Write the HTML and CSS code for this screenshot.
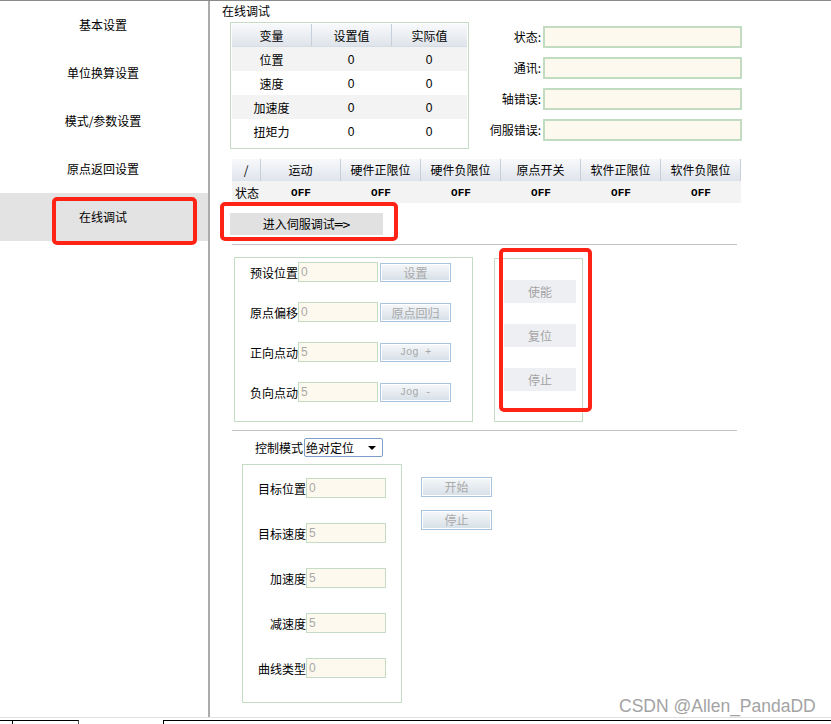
FILE: index.html
```html
<!DOCTYPE html>
<html lang="zh-CN">
<head>
<meta charset="utf-8">
<title>在线调试</title>
<link rel="stylesheet" href="styles.css">
</head>
<body>
<div class="screen">
  <div class="app">
    <nav class="sidebar">
      <div class="nav-item">基本设置</div>
      <div class="nav-item">单位换算设置</div>
      <div class="nav-item">模式/参数设置</div>
      <div class="nav-item">原点返回设置</div>
      <div class="nav-item active">在线调试</div>
    </nav>
    <main class="main">
      <div class="title">在线调试</div>
      <div class="top">
        <div class="vtable">
          <div class="vrow vhead"><span>变量</span><span>设置值</span><span>实际值</span></div>
          <div class="vrow alt"><span>位置</span><span class="num">0</span><span class="num">0</span></div>
          <div class="vrow"><span>速度</span><span class="num">0</span><span class="num">0</span></div>
          <div class="vrow alt"><span>加速度</span><span class="num">0</span><span class="num">0</span></div>
          <div class="vrow"><span>扭矩力</span><span class="num">0</span><span class="num">0</span></div>
        </div>
        <div class="status">
          <label>状态:</label><div class="field"></div>
          <label>通讯:</label><div class="field"></div>
          <label>轴错误:</label><div class="field"></div>
          <label>伺服错误:</label><div class="field"></div>
        </div>
      </div>
      <div class="io">
        <div class="io-row io-head">
          <span>/</span><span>运动</span><span>硬件正限位</span><span>硬件负限位</span><span>原点开关</span><span>软件正限位</span><span>软件负限位</span>
        </div>
        <div class="io-row io-state">
          <span>状态</span><span class="off">OFF</span><span class="off">OFF</span><span class="off">OFF</span><span class="off">OFF</span><span class="off">OFF</span><span class="off">OFF</span>
        </div>
      </div>
      <button class="enter">进入伺服调试<span class="arrow">═&gt;</span></button>
      <div class="sep"></div>
      <div class="panels">
        <div class="box jog">
          <div class="jrow"><span class="lbl">预设位置</span><div class="inp">0</div><div class="btn">设置</div></div>
          <div class="jrow"><span class="lbl">原点偏移</span><div class="inp">0</div><div class="btn">原点回归</div></div>
          <div class="jrow"><span class="lbl">正向点动</span><div class="inp">5</div><div class="btn mono">Jog +</div></div>
          <div class="jrow"><span class="lbl">负向点动</span><div class="inp">5</div><div class="btn mono">Jog -</div></div>
        </div>
        <div class="box servo">
          <div class="sbtn">使能</div>
          <div class="sbtn">复位</div>
          <div class="sbtn">停止</div>
        </div>
      </div>
      <div class="sep sep2"></div>
      <div class="mode">
        <span class="lbl">控制模式</span>
        <div class="select"><span>绝对定位</span><i class="caret"></i></div>
      </div>
      <div class="lower">
        <div class="box motion">
          <div class="mrow"><span class="lbl">目标位置</span><div class="inp">0</div></div>
          <div class="mrow"><span class="lbl">目标速度</span><div class="inp">5</div></div>
          <div class="mrow"><span class="lbl">加速度</span><div class="inp">5</div></div>
          <div class="mrow"><span class="lbl">减速度</span><div class="inp">5</div></div>
          <div class="mrow"><span class="lbl">曲线类型</span><div class="inp">0</div></div>
        </div>
        <div class="actions">
          <div class="btn">开始</div>
          <div class="btn">停止</div>
        </div>
      </div>
    </main>
  </div>
  <div class="bottom">
    <div class="bt-a"></div>
    <div class="bt-b"></div>
    <div class="bt-gap"></div>
    <div class="bt-c"></div>
  </div>
  <div class="watermark">CSDN @Allen_PandaDD</div>
  <div class="mark m1"></div>
  <div class="mark m2"></div>
  <div class="mark m3"></div>
</div>
</body>
</html>
```
FILE: styles.css
```css
* { box-sizing: border-box; margin: 0; padding: 0; }
html, body { width: 831px; height: 724px; overflow: hidden; background: #fff; }
body { font-family: "Noto Sans CJK SC", "Liberation Sans", sans-serif; font-size: 12px; color: #000; }

.screen { position: relative; width: 831px; height: 724px; border-top: 1px solid #8a8a8a; }
.app { display: flex; height: 716px; }

.sidebar { width: 210px; flex: none; border-right: 2px solid #ababab; }
.nav-item { height: 48px; line-height: 48px; text-align: center; padding-right: 2px; }
.nav-item.active { background: #e3e3e3; }

.main { flex: 1; padding: 2px 0 0 20px; }
.title { height: 16px; line-height: 16px; margin-left: -8px; }

.top { display: flex; margin-top: 3px; }
.vtable { width: 239px; height: 127px; border: 1px solid #c4dcc4; padding: 1px; }
.vrow { display: grid; grid-template-columns: 79px 80px 76px; height: 24px; text-align: center; }
.vrow span { padding-top: 2px; line-height: 22px; }
.vhead { height: 23px; background: linear-gradient(#f8f9fb, #dfe4eb); border-bottom: 1px solid #d6dce4; }
.vhead span { line-height: 20px; }
.vhead span + span { border-left: 1px solid #c6cfda; }
.vrow.alt { background: #f3f3f3; }
.num { font-family: "Liberation Sans", sans-serif; }

.status { display: grid; grid-template-columns: 72px 199px; column-gap: 2px; row-gap: 9px; margin-top: 4px; align-content: start; }
.status label { text-align: right; line-height: 22px; }
.field { height: 22px; border: 2px solid #c2dcc2; background: #fdf9ee; }

.io { width: 509px; margin: 10px 0 0 2px; }
.io-row { display: grid; grid-template-columns: 29px repeat(6, 80px); height: 22px; line-height: 22px; text-align: center; }
.io-head { background: linear-gradient(#f8f9fb, #dfe4eb); }
.io-head span { border-right: 1px solid #c6cfda; }
.io-state { background: #f3f3f3; }
.io-state span { padding-top: 2px; line-height: 20px; }
.io-state span:first-child { text-align: left; padding-left: 3px; }
.off { font-family: "Liberation Mono", monospace; font-weight: bold; font-size: 11px; }

.enter { display: block; margin-top: 10px; width: 153px; height: 22px; border: 0; background: #e1e1e1; font: inherit; color: #000; line-height: 22px; }
.arrow { font-family: "DejaVu Sans Mono", monospace; font-size: 13px; }

.sep { width: 505px; height: 1px; margin: 9px 0 0 2px; background: #c3c3c3; }
.sep2 { margin-top: 8px; }

.panels { display: flex; align-items: flex-start; margin: 12px 0 0 4px; }
.box { border: 1px solid #c4dcc4; }
.jog { width: 239px; height: 165px; padding: 4px 0 0 15px; display: flex; flex-direction: column; gap: 20px; }
.jrow { display: flex; align-items: center; height: 20px; }
.jrow .lbl { width: 48px; }
.inp { width: 80px; height: 20px; border: 1px solid #c4dcc4; background: #fdf9ee; color: #a9a9a9; padding-left: 2px; line-height: 18px; font-family: "Liberation Sans", sans-serif; }
.btn { width: 71px; height: 20px; border: 1px solid #a8c4de; background: linear-gradient(#f6f8fa, #d6dfe7); box-shadow: inset 0 0 0 1px #fff; color: #a9a9a9; text-align: center; line-height: 18px; }
.jrow .btn { margin-left: 2px; height: 19px; line-height: 17px; }
.btn.mono { font-family: "Liberation Mono", monospace; font-size: 10.5px; }

.servo { width: 89px; height: 164px; margin: 1px 0 0 21px; padding: 21px 0 0 9px; display: flex; flex-direction: column; gap: 21px; }
.sbtn { width: 72px; height: 23px; line-height: 23px; background: #eeeff3; color: #a3a3a3; text-align: center; }

.mode { display: flex; align-items: center; height: 19px; margin: 7px 0 0 25px; }
.mode .lbl { width: 48px; }
.select { display: flex; align-items: center; width: 79px; height: 19px; margin-left: 1px; padding-left: 1px; border: 1px solid #7d9ec9; border-radius: 2px; line-height: 17px; }
.caret { margin-left: auto; margin-right: 6px; width: 0; height: 0; border-left: 4px solid transparent; border-right: 4px solid transparent; border-top: 4px solid #000; }

.lower { display: flex; align-items: flex-start; margin: 7px 0 0 12px; }
.motion { width: 160px; height: 239px; padding-top: 13px; display: flex; flex-direction: column; gap: 25px; }
.mrow { display: flex; align-items: center; height: 20px; }
.mrow .lbl { width: 63px; text-align: right; }
.actions { display: flex; flex-direction: column; gap: 13px; margin: 13px 0 0 19px; }

.bottom { display: flex; height: 7px; border-top: 1px solid #e0e0e0; padding-top: 2px; }
.bt-a { width: 13px; border-top: 1px solid #000; border-right: 1px solid #000; }
.bt-b { width: 66px; border-top: 1px solid #000; border-right: 1px solid #555; }
.bt-gap { width: 84px; }
.bt-c { flex: 1; border-top: 1px solid #000; border-left: 1px solid #000; }

.watermark { position: absolute; left: 619px; top: 695px; font-family: "Liberation Sans", Arial, sans-serif; font-size: 17.5px; line-height: 20px; color: #a3a3a3; text-shadow: 0 0 1px #fff; }

.mark { position: absolute; border: 4px solid #ff2316; border-radius: 5px; }
.m1 { left: 52px; top: 196px; width: 145px; height: 48px; }
.m2 { left: 220px; top: 201px; width: 178px; height: 39px; }
.m3 { left: 499px; top: 247px; width: 93px; height: 164px; }
```
